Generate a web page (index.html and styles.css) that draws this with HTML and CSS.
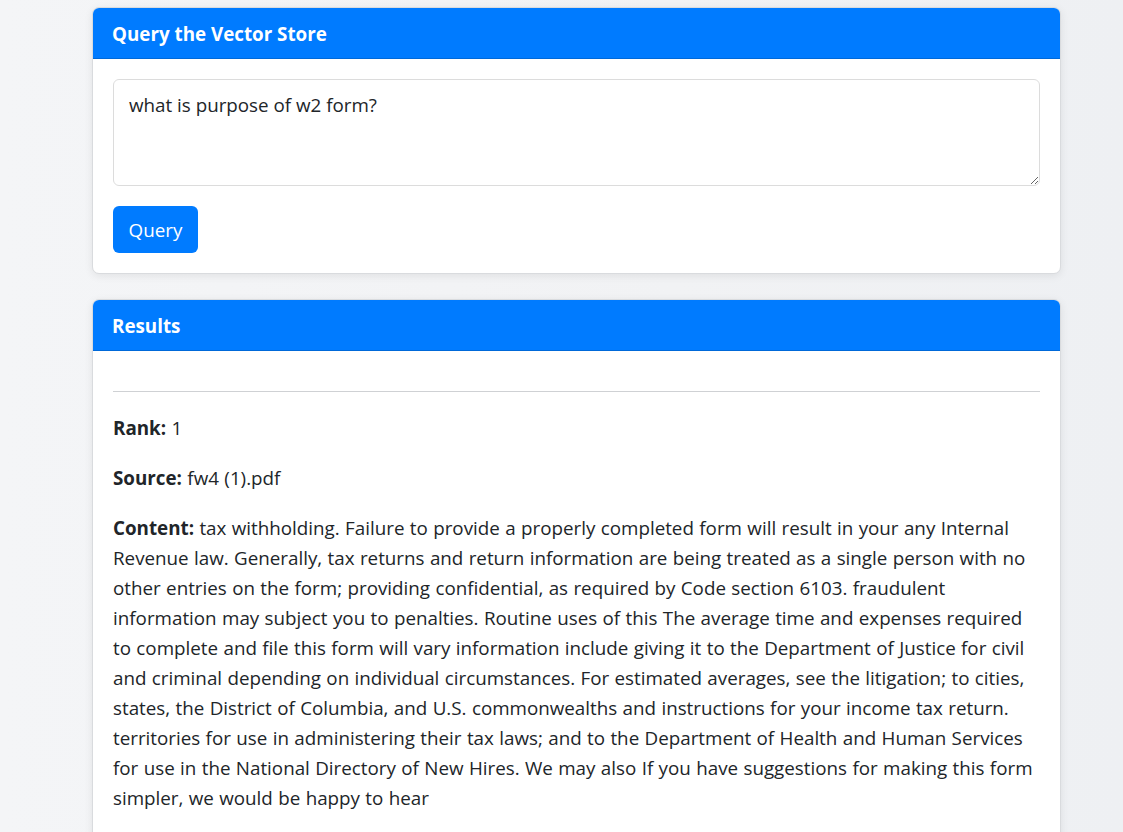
FILE: index.html
```html
<!DOCTYPE html>
<html lang="en">
<head>
<meta charset="utf-8">
<title>Vector Store Query</title>
<link rel="stylesheet" href="styles.css">
</head>
<body>
<main class="page">
  <section class="card">
    <header class="card-header">Query the Vector Store</header>
    <div class="card-body">
      <textarea class="query-input">what is purpose of w2 form?</textarea>
      <button class="btn-primary" type="button">Query</button>
    </div>
  </section>
  <section class="card">
    <header class="card-header">Results</header>
    <div class="card-body results">
      <hr class="divider">
      <p class="field"><strong>Rank:</strong> 1</p>
      <p class="field"><strong>Source:</strong> fw4 (1).pdf</p>
      <p class="field"><strong>Content:</strong> tax withholding. Failure to provide a properly completed form will result in your any Internal Revenue law. Generally, tax returns and return information are being treated as a single person with no other entries on the form; providing confidential, as required by Code section 6103. fraudulent information may subject you to penalties. Routine uses of this The average time and expenses required to complete and file this form will vary information include giving it to the Department of Justice for civil and criminal depending on individual circumstances. For estimated averages, see the litigation; to cities, states, the District of Columbia, and U.S. commonwealths and instructions for your income tax return. territories for use in administering their tax laws; and to the Department of Health and Human Services for use in the National Directory of New Hires. We may also If you have suggestions for making this form simpler, we would be happy to hear</p>
    </div>
  </section>
</main>
</body>
</html>
```

FILE: styles.css
```css
* { box-sizing: border-box; }
html, body { height: 100%; }
body {
  margin: 0;
  background: linear-gradient(90deg, #f4f5f7 0%, #f1f2f4 60%, #eef0f3 100%);
  font-family: "Open Sans", "Noto Sans", sans-serif;
  color: #212529;
  overflow: hidden;
}
.page {
  width: 969px;
  margin-left: 92px;
  padding-top: 7px;
  display: flex;
  flex-direction: column;
  gap: 25px;
}
.card {
  background: #fff;
  border: 1px solid #d9dbde;
  border-radius: 7px;
  box-shadow: 0 2px 8px rgba(0, 0, 0, 0.08);
  overflow: hidden;
}
.card-header {
  background: #007bff;
  color: #fff;
  font-weight: 700;
  font-size: 18.8px;
  height: 52px;
  padding: 2px 20px 0;
  display: flex;
  align-items: center;
  border-bottom: 1px solid #0069d9;
  margin: -1px -1px 0;
}
.card-body {
  padding: 20px 20px 20px;
  display: flex;
  flex-direction: column;
  align-items: flex-start;
  gap: 20px;
}
.query-input {
  width: 100%;
  height: 107px;
  border: 1px solid #dcdcdc;
  border-radius: 6px;
  padding: 11px 15px;
  font-family: inherit;
  font-size: 18.8px;
  line-height: 28px;
  color: #212529;
  resize: vertical;
}
.btn-primary {
  background: #007bff;
  color: #fff;
  border: 0;
  border-radius: 6px;
  width: 85px;
  height: 47px;
  font-family: inherit;
  font-size: 18.8px;
  padding: 0;
}
.results { display: block; }
.divider {
  border: 0;
  border-top: 1px solid #cfd1d4;
  margin: 20px 0 21px;
}
.field {
  margin: 0 0 20px;
  font-size: 18.8px;
  line-height: 30px;
  word-spacing: 0.5px;
}
.field strong { font-weight: 700; }
```
